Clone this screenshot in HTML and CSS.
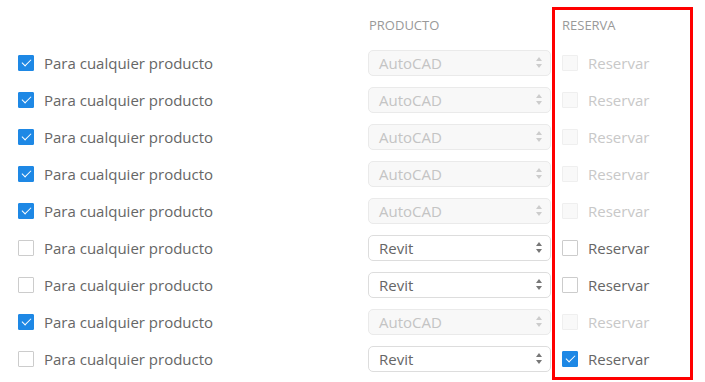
FILE: index.html
```html
<!DOCTYPE html>
<html lang="es">
<head>
<meta charset="UTF-8">
<meta name="viewport" content="width=device-width, initial-scale=1.0">
<title>Reservas por producto</title>
<link rel="stylesheet" href="styles.css">
</head>
<body>
<div class="table">
    <div class="col col-any">
        <div class="head"></div>
        <label class="row"><span class="box checked"></span>Para cualquier producto</label>
        <label class="row"><span class="box checked"></span>Para cualquier producto</label>
        <label class="row"><span class="box checked"></span>Para cualquier producto</label>
        <label class="row"><span class="box checked"></span>Para cualquier producto</label>
        <label class="row"><span class="box checked"></span>Para cualquier producto</label>
        <label class="row"><span class="box"></span>Para cualquier producto</label>
        <label class="row"><span class="box"></span>Para cualquier producto</label>
        <label class="row"><span class="box checked"></span>Para cualquier producto</label>
        <label class="row"><span class="box"></span>Para cualquier producto</label>
    </div>

    <div class="col col-product">
        <div class="head">PRODUCTO</div>
        <div class="row"><div class="select disabled"><span>AutoCAD</span><svg class="arrows" width="6" height="11" viewBox="0 0 6 11"><path d="M3 0L6 4H0z M3 11L6 7H0z"/></svg></div></div>
        <div class="row"><div class="select disabled"><span>AutoCAD</span><svg class="arrows" width="6" height="11" viewBox="0 0 6 11"><path d="M3 0L6 4H0z M3 11L6 7H0z"/></svg></div></div>
        <div class="row"><div class="select disabled"><span>AutoCAD</span><svg class="arrows" width="6" height="11" viewBox="0 0 6 11"><path d="M3 0L6 4H0z M3 11L6 7H0z"/></svg></div></div>
        <div class="row"><div class="select disabled"><span>AutoCAD</span><svg class="arrows" width="6" height="11" viewBox="0 0 6 11"><path d="M3 0L6 4H0z M3 11L6 7H0z"/></svg></div></div>
        <div class="row"><div class="select disabled"><span>AutoCAD</span><svg class="arrows" width="6" height="11" viewBox="0 0 6 11"><path d="M3 0L6 4H0z M3 11L6 7H0z"/></svg></div></div>
        <div class="row"><div class="select"><span>Revit</span><svg class="arrows" width="6" height="11" viewBox="0 0 6 11"><path d="M3 0L6 4H0z M3 11L6 7H0z"/></svg></div></div>
        <div class="row"><div class="select"><span>Revit</span><svg class="arrows" width="6" height="11" viewBox="0 0 6 11"><path d="M3 0L6 4H0z M3 11L6 7H0z"/></svg></div></div>
        <div class="row"><div class="select disabled"><span>AutoCAD</span><svg class="arrows" width="6" height="11" viewBox="0 0 6 11"><path d="M3 0L6 4H0z M3 11L6 7H0z"/></svg></div></div>
        <div class="row"><div class="select"><span>Revit</span><svg class="arrows" width="6" height="11" viewBox="0 0 6 11"><path d="M3 0L6 4H0z M3 11L6 7H0z"/></svg></div></div>
    </div>

    <div class="col col-reserve">
        <div class="head">RESERVA</div>
        <label class="row disabled"><span class="box"></span>Reservar</label>
        <label class="row disabled"><span class="box"></span>Reservar</label>
        <label class="row disabled"><span class="box"></span>Reservar</label>
        <label class="row disabled"><span class="box"></span>Reservar</label>
        <label class="row disabled"><span class="box"></span>Reservar</label>
        <label class="row"><span class="box"></span>Reservar</label>
        <label class="row"><span class="box"></span>Reservar</label>
        <label class="row disabled"><span class="box"></span>Reservar</label>
        <label class="row"><span class="box checked"></span>Reservar</label>
    </div>
</div>
</body>
</html>
```

FILE: styles.css
```css
body {
    margin: 0;
    font-family: 'Open Sans', sans-serif;
    font-size: 15px;
    color: #666;
    background-color: #ffffff;
}
.table {
    display: flex;
    padding: 7px 0 0 18px;
}
.col {
    display: flex;
    flex-direction: column;
}
.col-any {
    width: 350px;
    padding-top: 3px;
}
.col-product {
    width: 184px;
    padding-top: 3px;
}
.col-reserve {
    width: 128px;
    padding: 0 0 0 7px;
    border: 3px solid #ff0000;
}
.head {
    height: 34px;
    line-height: 30px;
    font-size: 13px;
    color: #999;
}
.col-product .head {
    padding-left: 1px;
}
.row {
    height: 37px;
    display: flex;
    align-items: center;
    white-space: nowrap;
}
.box {
    width: 14px;
    height: 14px;
    border: 1px solid #ccc;
    border-radius: 1px;
    background-color: #fff;
    margin-right: 10px;
    position: relative;
    flex: none;
}
.box.checked {
    background-color: #1e88e5;
    border-color: #1e88e5;
}
.box.checked::after {
    content: '';
    position: absolute;
    left: 3px;
    top: 3px;
    width: 8px;
    height: 4px;
    border-left: 1.5px solid #fff;
    border-bottom: 1.5px solid #fff;
    transform: rotate(-45deg);
}
.row.disabled {
    color: #c8c8c8;
}
.row.disabled .box {
    background-color: #f9f9f9;
    border-color: #efefef;
}
.select {
    width: 183px;
    height: 26px;
    border: 1px solid #ddd;
    border-radius: 5px;
    background-color: #fff;
    display: flex;
    align-items: center;
    justify-content: space-between;
    padding: 0 8px 0 10px;
    box-sizing: border-box;
    color: #666;
}
.select.disabled {
    background-color: #f8f8f8;
    border-color: #eaeaea;
    color: #c4c4c4;
}
.arrows {
    fill: #777;
}
.select.disabled .arrows {
    fill: #ccc;
}
```
